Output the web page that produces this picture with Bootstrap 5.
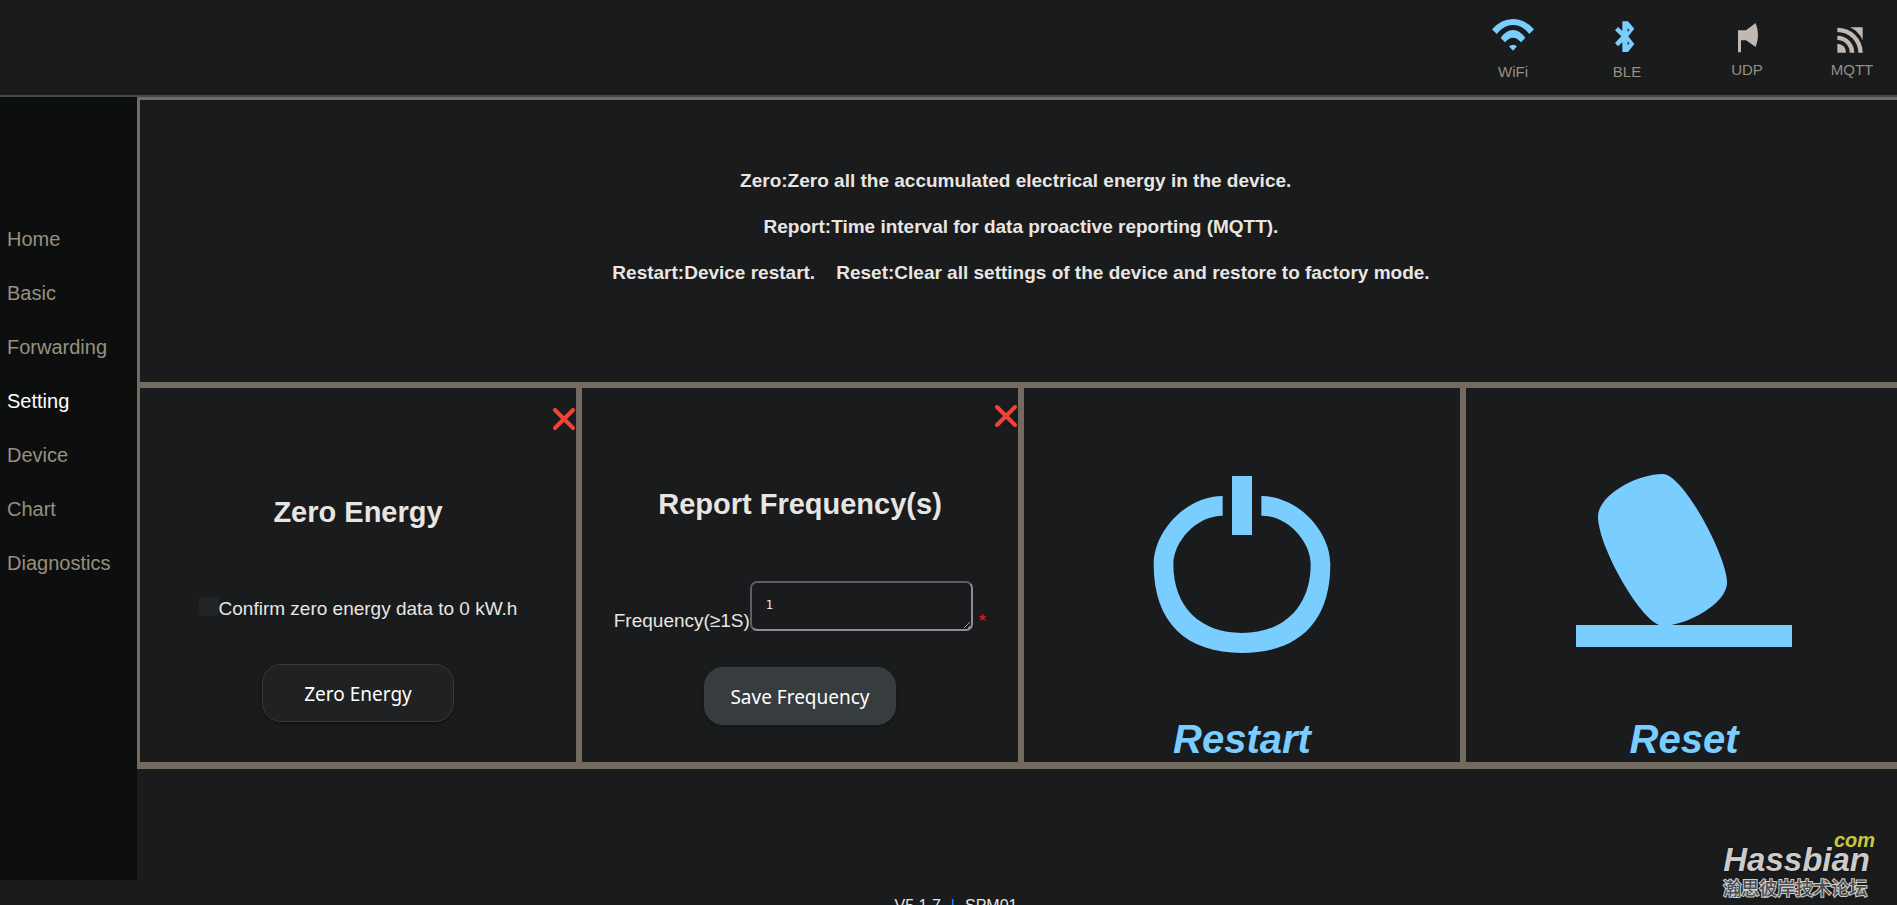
<!DOCTYPE html>
<html lang="en">
<head>
<meta charset="utf-8">
<meta name="viewport" content="width=device-width, initial-scale=1">
<title>SPM01 - Setting</title>
<link href="https://cdn.jsdelivr.net/npm/bootstrap@5.3.0/dist/css/bootstrap.min.css" rel="stylesheet">
<style>
  :root {
    --page: #1a1b1c;
    --side: #0d0f0e;
    --line: #736b5f;
    --ink: #e8e6e3;
    --muted: #988f81;
    --accent: #7acdff;
  }
  body {
    background: var(--page);
    color: var(--ink);
    font-family: "Liberation Sans", Arial, sans-serif;
    font-size: 19px;
    line-height: 24px;
  }
  .topbar { height: 97px; border-bottom: 2px solid #46494c; padding-right: 3px; }
  .status { width: 114px; font-size: 15px; line-height: 20px; color: var(--muted); }
  .status-wide { width: 126px; }
  .status-end { width: 84px; }
  .status svg { width: 48px; height: 45px; fill: #c0b9b1; }
  .status.on svg { height: 49px; fill: var(--accent); }

  .workspace { height: calc(100vh - 122px); }
  .sidebar { width: 137px; background: var(--side); padding-top: 115px; }
  .sidebar .nav-link { padding: 0 7px; font-size: 20px; line-height: 54px; color: var(--muted); }
  .sidebar .nav-link.active { color: #fff; }

  .board { margin-right: -8px; min-width: 0; }
  .tile { border: 3px solid var(--line); }
  .board-frame { border-bottom: 4px solid var(--line); }
  .info { min-height: 288px; padding-top: 58px; font-weight: 700; line-height: 46px; }
  .tiles { display: grid; grid-template-columns: repeat(4, minmax(0, 1fr)); }
  .tiles .tile { min-height: 380px; }
  .tile h2 { font-size: 29px; line-height: 34px; font-weight: 700; }
  .tile-zero { padding-top: 20px; }
  .tile-zero h2 { margin: 65px 0 68px; }
  .tile-zero .pill { margin-top: 43px; }
  .tile-report { padding-top: 17px; }
  .tile-report h2 { margin: 60px 0 60px; }
  .tile-report .pill { margin-top: 36px; }
  .cross { width: 22px; height: 22px; margin-right: 1px; padding: 0; border: 0; background: none; display: block; }
  .cross svg { display: block; width: 22px; height: 22px; }

  .tick { appearance: none; width: 20px; height: 19px; margin: 0; border-radius: 4px; background: #222325; }
  .tick:checked { background: var(--accent); }
  .freq {
    width: 223px; height: 50px; padding: 10px 14px;
    border: 2px solid; border-color: #5f5d66 #8f8c99 #8f8c99 #5f5d66; border-radius: 7px;
    background: var(--page); color: var(--ink);
    font: 12px/24px "DejaVu Sans Mono", monospace; resize: both; overflow: hidden;
  }
  .field { line-height: 20px; }
  .star { color: #f01818; margin-left: 6px; }
  .pill {
    width: 192px; height: 58px; border-radius: 19px; border: 1px solid #37393b; padding-top: 3px;
    background: #202123; color: #fff; font-family: "Noto Sans", sans-serif; font-size: 19px;
    box-shadow: 0 2px 3px rgba(0, 0, 0, .3);
  }
  .pill-solid { background: #373c3e; border-color: #3b4042; }

  .action { border: 0; padding: 0; background: none; color: var(--accent); font-size: 40px; line-height: 46px; font-weight: 700; font-style: italic; }
  .action svg { width: 216px; height: 180px; margin-bottom: 62px; fill: currentColor; }

  .foot { font-size: 16px; line-height: 24px; padding: 14px 0 0 15px; gap: 10px; }
  .foot-bar { color: #1f8fff; }

  .mark-logo { right: 22px; bottom: 9px; color: #cbcbcb; font-weight: 700; font-style: italic; }
  .mark-name { font-size: 33px; line-height: 36px; padding-right: 5px; text-shadow: 0 0 2px #000; }
  .mark-com { top: -12px; right: 0; font-size: 20px; line-height: 20px; color: #c8c83c; }
  .mark-cn {
    font: 500 18px/18px "Noto Sans CJK SC", sans-serif; color: #4c4d50;
    -webkit-text-stroke: 2px #cfcfcf; paint-order: stroke fill;
  }
</style>
</head>
<body class="vh-100 overflow-hidden position-relative">

<header class="topbar d-flex justify-content-end align-items-center">
  <div class="status on d-flex flex-column align-items-center">
    <svg viewBox="90 39 144 147" aria-hidden="true">
      <path d="M99 88Q127 57 162 57T225 88L211 102Q189 75 162 75T113 102Z"/>
      <path d="M125 114Q141 90 162 90T199 114L186 127Q175 113 162 113T138 127Z"/>
      <path d="M150 139Q162 130 174 139L162 152Z"/>
    </svg>
    <span>WiFi</span>
  </div>
  <div class="status on d-flex flex-column align-items-center">
    <svg viewBox="431 39 144 147" aria-hidden="true">
      <path fill-rule="evenodd" d="M489 64H506L525 86L507 109L525 132L506 156H489V127L476 139L467 129L486 109L467 91L476 81L489 93ZM505 84V96L510 90ZM505 124V136L510 130Z"/>
    </svg>
    <span>BLE</span>
  </div>
  <div class="status status-wide d-flex flex-column align-items-center">
    <svg viewBox="792 45 144 135" aria-hidden="true">
      <path d="M837 91H861L890 69Q904 105 890 141L861 121H846V157H837Z"/>
    </svg>
    <span>UDP</span>
  </div>
  <div class="status status-end d-flex flex-column align-items-center">
    <svg viewBox="1106 45 144 135" aria-hidden="true">
      <path d="M1134 131A26 26 0 0 1 1160 158H1134Z"/>
      <path d="M1134 107A51 51 0 0 1 1185 158H1171A37 37 0 0 0 1134 120Z"/>
      <path d="M1134 83A76 75 0 0 1 1210 158H1197A63 62 0 0 0 1134 96Z"/>
      <path d="M1172 82H1210V120Q1198 94 1172 82Z"/>
    </svg>
    <span>MQTT</span>
  </div>
</header>

<div class="workspace d-flex">
  <nav class="sidebar flex-shrink-0 nav flex-column flex-nowrap">
    <a class="nav-link" href="#home">Home</a>
    <a class="nav-link" href="#basic">Basic</a>
    <a class="nav-link" href="#forwarding">Forwarding</a>
    <a class="nav-link active" href="#setting" aria-current="page">Setting</a>
    <a class="nav-link" href="#device">Device</a>
    <a class="nav-link" href="#chart">Chart</a>
    <a class="nav-link" href="#diagnostics">Diagnostics</a>
  </nav>

  <main class="board flex-grow-1">
    <div class="board-frame">
      <section class="tile info text-center">
        <p class="m-0">Zero:Zero all the accumulated electrical energy in the device.&nbsp;&nbsp;</p>
        <p class="m-0">Report:Time interval for data proactive reporting (MQTT).</p>
        <p class="m-0">Restart:Device restart.&nbsp;&nbsp;&nbsp; Reset:Clear all settings of the device and restore to factory mode.</p>
      </section>

      <div class="tiles">
        <section class="tile tile-zero d-flex flex-column align-items-center">
          <button class="cross align-self-end" type="button" aria-label="Close">
            <svg viewBox="0 0 22 22"><path d="M2 2L20 20M20 2L2 20" stroke="#f44336" stroke-width="4" stroke-linecap="round"/></svg>
          </button>
          <h2>Zero Energy</h2>
          <div class="d-flex">
            <input class="tick" type="checkbox" id="confirm">
            <label for="confirm">Confirm zero energy data to 0 kW.h</label>
          </div>
          <button class="pill" type="button">Zero Energy</button>
        </section>

        <section class="tile tile-report d-flex flex-column align-items-center">
          <button class="cross align-self-end" type="button" aria-label="Close">
            <svg viewBox="0 0 22 22"><path d="M2 2L20 20M20 2L2 20" stroke="#f44336" stroke-width="4" stroke-linecap="round"/></svg>
          </button>
          <h2>Report Frequency(s)</h2>
          <div class="field d-flex align-items-end">
            <label for="freq">Frequency(≥1S)</label>
            <textarea class="freq" id="freq" rows="1">1</textarea>
            <span class="star">*</span>
          </div>
          <button class="pill pill-solid" type="button">Save Frequency</button>
        </section>

        <section class="tile d-flex flex-column align-items-center justify-content-end">
          <button class="action d-flex flex-column align-items-center" type="button">
            <svg viewBox="372 312 648 540" aria-hidden="true">
              <path d="M666 318H726V495H666Z"/>
              <path d="M638 378V437C560 437 490 514 490 583C490 710 570 789 696 789S902 710 902 583C902 514 832 437 754 437V378C862 378 961 482 961 583C961 760 862 849 696 849S431 760 431 583C431 482 530 378 638 378Z"/>
            </svg>
            Restart
          </button>
        </section>

        <section class="tile d-flex flex-column align-items-center justify-content-end">
          <button class="action d-flex flex-column align-items-center" type="button">
            <svg viewBox="378 312 648 540" aria-hidden="true">
              <path d="M638 312C560 312 444 375 444 440C444 530 578 767 638 767C710 767 831 700 831 638C831 560 700 312 638 312Z"/>
              <path d="M378 765H1026V831H378Z"/>
            </svg>
            Reset
          </button>
        </section>
      </div>
    </div>
  </main>
</div>

<footer class="foot d-flex justify-content-center">
  <span>V5.1.7</span><span class="foot-bar">|</span><span>SPM01</span>
</footer>

<div class="mark-logo position-absolute">
  <div class="mark-name">Hassbian</div>
  <div class="mark-com position-absolute">com</div>
  <div class="mark-cn">瀚思彼岸技术论坛</div>
</div>

<script src="https://cdn.jsdelivr.net/npm/bootstrap@5.3.0/dist/js/bootstrap.bundle.min.js"></script>
</body>
</html>
